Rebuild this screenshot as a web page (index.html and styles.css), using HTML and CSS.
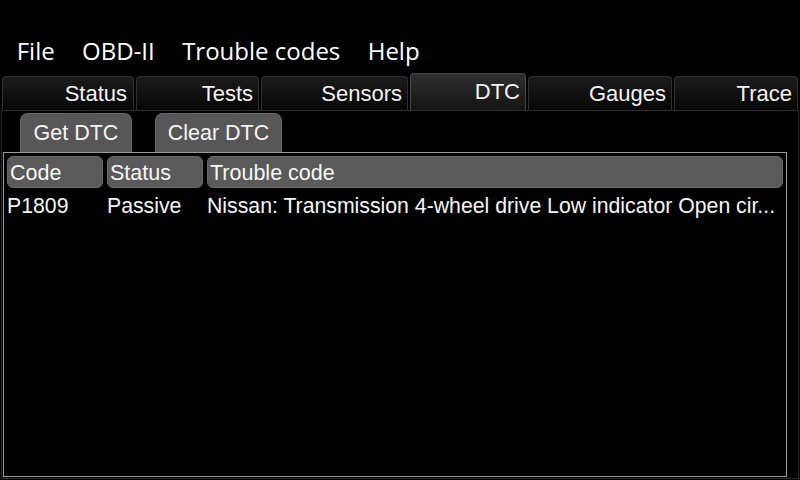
FILE: index.html
```html
<!DOCTYPE html>
<html>
<head>
<meta charset="utf-8">
<link rel="stylesheet" href="styles.css">
</head>
<body>
<div class="screen">
  <nav class="menubar">
    <span class="menu-item">File</span>
    <span class="menu-item">OBD-II</span>
    <span class="menu-item">Trouble codes</span>
    <span class="menu-item">Help</span>
  </nav>
  <div class="tabs">
    <div class="tab tab-status">Status</div>
    <div class="tab tab-tests">Tests</div>
    <div class="tab tab-sensors">Sensors</div>
    <div class="tab tab-dtc active">DTC</div>
    <div class="tab tab-gauges">Gauges</div>
    <div class="tab tab-trace">Trace</div>
  </div>
  <section class="panel">
    <div class="toolbar">
      <button class="btn btn-get">Get DTC</button>
      <button class="btn btn-clear">Clear DTC</button>
    </div>
    <div class="table">
      <div class="thead">
        <div class="th">Code</div>
        <div class="th">Status</div>
        <div class="th">Trouble code</div>
      </div>
      <div class="tr">
        <div class="td">P1809</div>
        <div class="td">Passive</div>
        <div class="td">Nissan: Transmission 4-wheel drive Low indicator Open cir...</div>
      </div>
    </div>
  </section>
</div>
</body>
</html>
```
FILE: styles.css
```css
html, body {
  margin: 0;
  padding: 0;
  background: #000;
}
.screen {
  width: 800px;
  height: 480px;
  background: #000;
  color: #f4f4f4;
  font-family: "Liberation Sans", Arial, sans-serif;
  overflow: hidden;
}
.menubar {
  display: flex;
  height: 73px;
  box-sizing: border-box;
  padding: 34px 0 0 3px;
  font-family: "Open Sans", "Noto Sans", sans-serif;
  font-size: 24px;
  line-height: 33px;
}
.menu-item {
  padding: 0 13.7px;
  color: #fff;
}
.tabs {
  display: flex;
  align-items: flex-end;
  gap: 2px;
  height: 37px;
  padding-left: 2px;
}
.tab {
  box-sizing: border-box;
  height: 34px;
  border: 1px solid #303030;
  border-bottom: none;
  border-radius: 4px 4px 0 0;
  background: linear-gradient(#1b1b1b, #060606);
  font-size: 22px;
  line-height: 26px;
  padding: 4px 5px 3px 0;
  text-align: right;
  color: #f2f2f2;
}
.tab.active {
  height: 37px;
  padding-top: 5px;
  border-color: #474747;
  background: linear-gradient(#2f2f2f, #141414);
}
.tab-status { width: 132px; padding-right: 6px; }
.tab-tests { width: 123px; }
.tab-sensors { width: 147px; }
.tab-dtc { width: 116px; }
.tab-gauges { width: 144px; }
.tab-trace { width: 124px; }
.panel {
  box-sizing: border-box;
  width: 798px;
  height: 369px;
  margin-left: 1px;
  border: 1px solid #2c2c2c;
}
.toolbar {
  display: flex;
  gap: 23px;
  padding: 2px 0 0 18px;
}
.btn {
  box-sizing: border-box;
  height: 39px;
  border: 1px solid #6a6a6a;
  border-bottom: none;
  border-radius: 8px 8px 0 0;
  background: #575757;
  color: #f4f4f4;
  font-family: "Liberation Sans", Arial, sans-serif;
  font-size: 21.5px;
  padding: 0;
  text-align: center;
}
.btn-get { width: 112px; }
.btn-clear { width: 127px; }
.table {
  box-sizing: border-box;
  width: 784px;
  height: 325px;
  margin-left: 1px;
  border: 1px solid #9a9a9a;
  padding: 3px 0 0 3px;
  font-size: 21.5px;
}
.thead, .tr {
  display: grid;
  grid-template-columns: 96px 96px 576px;
  column-gap: 4px;
}
.th {
  box-sizing: border-box;
  height: 32px;
  line-height: 32px;
  padding-left: 2px;
  border: 1px solid #666;
  border-radius: 6px;
  background: #5a5a5a;
  color: #f6f6f6;
  white-space: nowrap;
  overflow: hidden;
}
.tr {
  margin-top: 4px;
}
.td {
  font-size: 21.25px;
  line-height: 28px;
  white-space: nowrap;
  color: #f6f6f6;
}
```
